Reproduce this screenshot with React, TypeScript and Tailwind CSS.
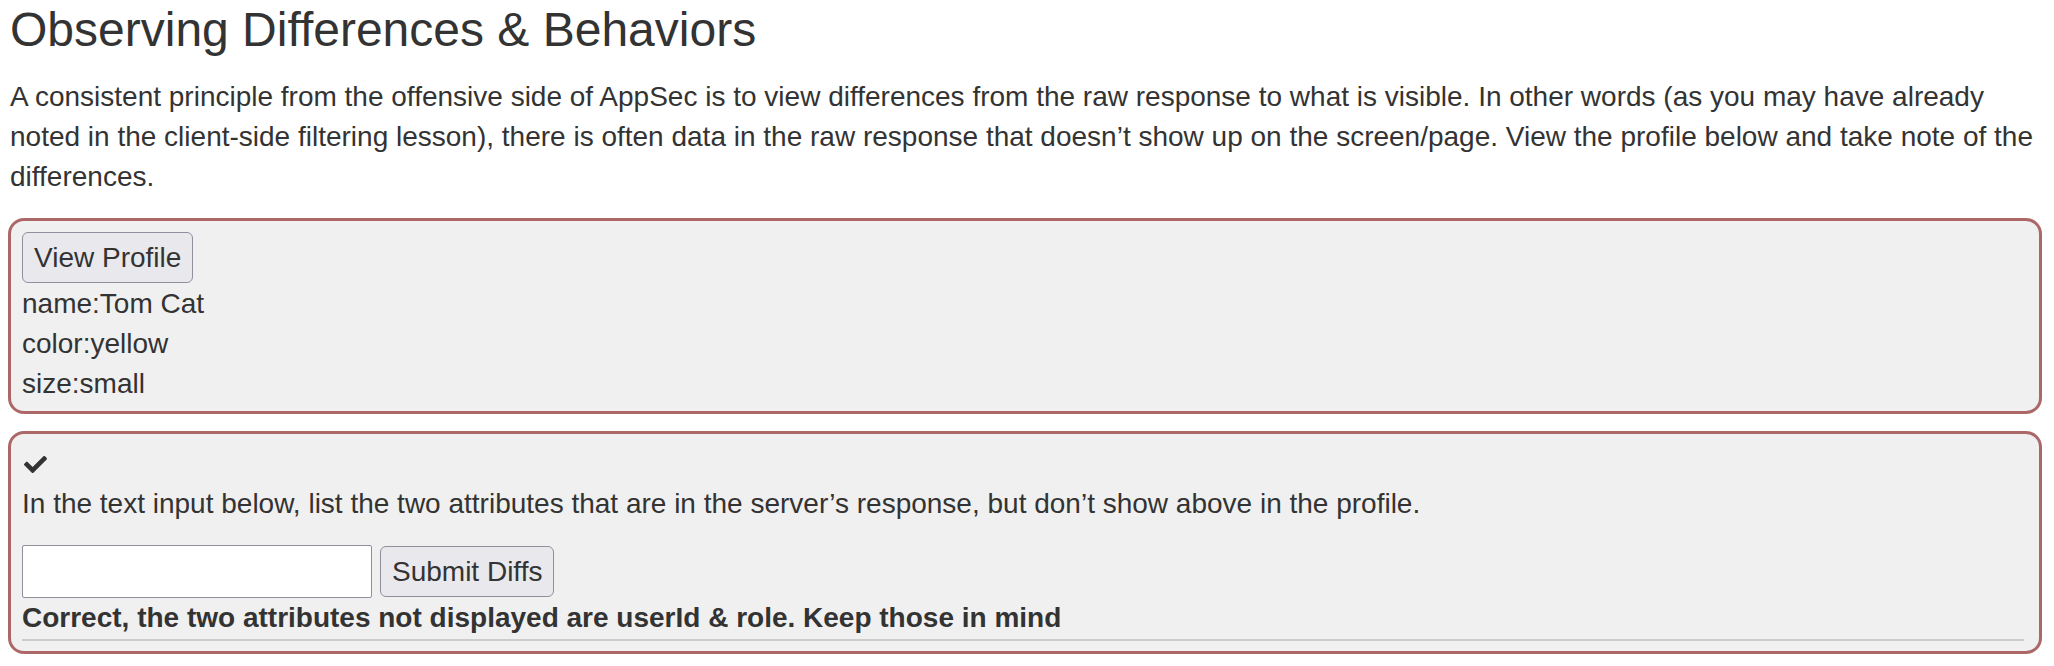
import { FaCheck } from "react-icons/fa";

const Panel = ({ children, className = "" }: { children: React.ReactNode; className?: string }) => (
  <div
    className={`rounded-[16px] border-[3px] border-[#ac6767] bg-[#f0f0f0] px-[11px] ${className}`}
  >
    {children}
  </div>
);

export default function App() {
  return (
    <div
      className="min-h-screen bg-white pl-[8px] pr-[12px] text-[#333333]"
      style={{ fontFamily: '"Liberation Sans", Arial, sans-serif' }}
    >
      <h2 className="pl-[2px] pt-[2px] text-[48px] leading-[56px] font-normal">
        Observing Differences &amp; Behaviors
      </h2>
      <p className="mt-[19px] pl-[2px] text-[28px] leading-[40px]">
        A consistent principle from the offensive side of AppSec is to view differences from the raw
        response to what is visible. In other words (as you may have already noted in the client-side
        filtering lesson), there is often data in the raw response that doesn’t show up on the
        screen/page. View the profile below and take note of the differences.
      </p>

      <div className="mt-[21px] flex flex-col gap-[17px] text-[28px] leading-[40px]">
        <Panel className="pt-[11px] pb-[7px]">
          <button className="h-[51px] rounded-[6px] border border-[#8f8f9d] bg-[#e9e9ed] px-[11px] text-[28px] leading-[30px] text-[#333333]">
            View Profile
          </button>
          <div className="mt-[1px]">name:Tom Cat</div>
          <div>color:yellow</div>
          <div>size:small</div>
        </Panel>

        <Panel className="pt-[10px] pb-[10px]">
          <div className="flex h-[40px] items-center pl-[2px]">
            <FaCheck className="h-[23px] w-[23px] text-[#333333]" />
          </div>
          <p className="mb-[21px]">
            In the text input below, list the two attributes that are in the server’s response, but
            don’t show above in the profile.
          </p>
          <div className="flex items-center gap-[8px]">
            <input
              type="text"
              className="h-[53px] w-[350px] rounded-[2px] border border-[#8f8f9d] bg-white px-[4px]"
            />
            <button className="h-[51px] rounded-[6px] border border-[#8f8f9d] bg-[#e9e9ed] px-[11px] text-[28px] leading-[30px] text-[#333333]">
              Submit Diffs
            </button>
          </div>
          <div className="mt-[2px] font-bold leading-[36px]">
            Correct, the two attributes not displayed are userId &amp; role. Keep those in mind
          </div>
          <hr className="mt-[3px] mr-[4px] border-t-[2px] border-[#cccccc]" />
        </Panel>
      </div>
    </div>
  );
}
